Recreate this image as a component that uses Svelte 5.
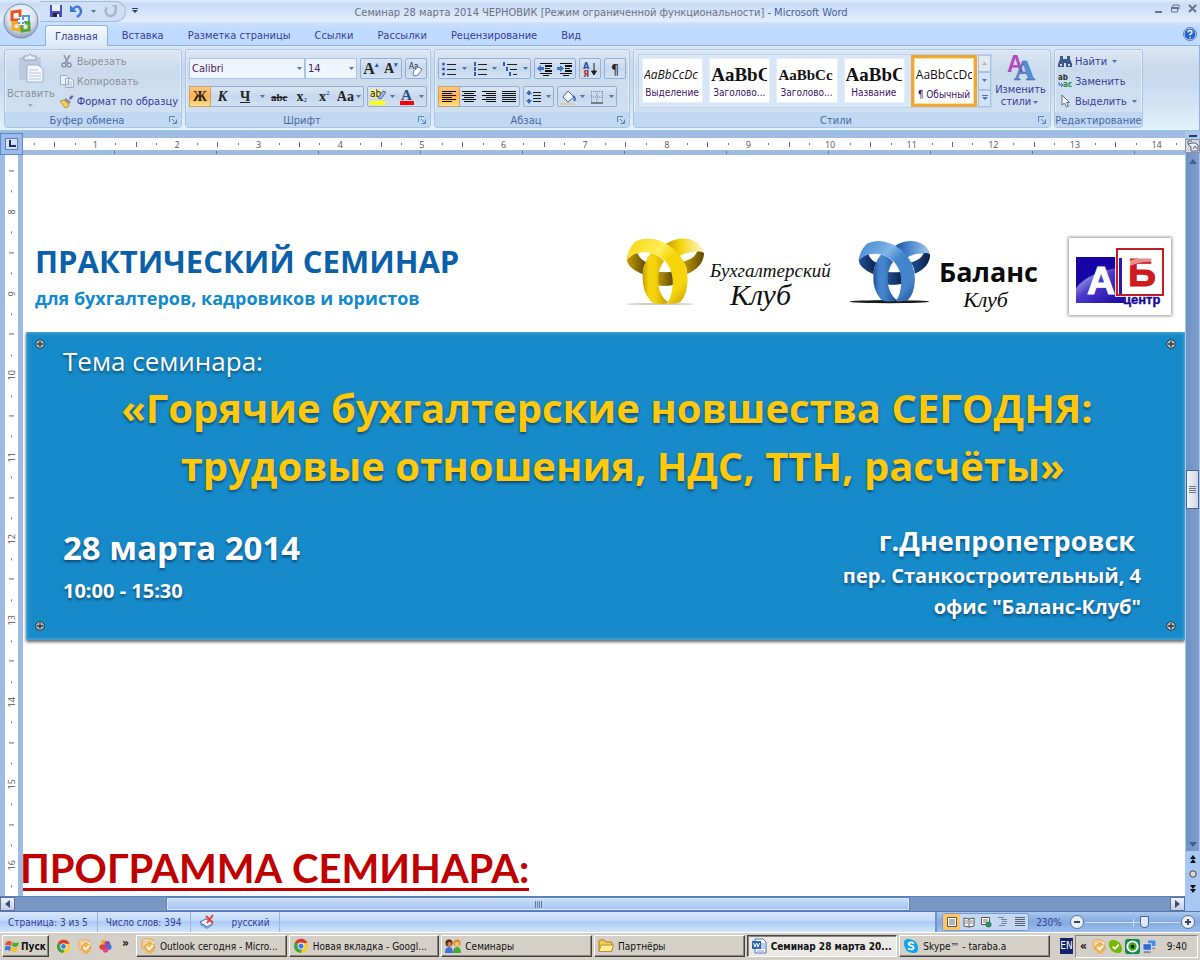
<script>
  const tabs = ['Главная', 'Вставка', 'Разметка страницы', 'Ссылки', 'Рассылки', 'Рецензирование', 'Вид'];
  const hTicks = Array.from({ length: 57 }, (_, i) => (i % 4 === 3 ? String((i + 1) / 4) : i % 4 === 1 ? '|' : '·'));
  const vTicks = Array.from({ length: 36 }, (_, i) => (i % 4 === 2 ? String(8 + (i - 2) / 4) : i % 4 === 0 ? '|' : '·'));
  const styles = [
    { name: 'Выделение', sample: 'AaBbCcDc', kind: 'em' },
    { name: 'Заголово...', sample: 'AaBbCc', kind: 'h1' },
    { name: 'Заголово...', sample: 'AaBbCc', kind: 'h2' },
    { name: 'Название', sample: 'AaBbCc', kind: 'h1' },
    { name: '¶ Обычный', sample: 'AaBbCcDc', kind: 'normal', on: true }
  ];
  const tasks = [
    { icon: 'outlook', text: 'Outlook сегодня - Micro...' },
    { icon: 'chrome', text: 'Новая вкладка - Googl...' },
    { icon: 'people', text: 'Семинары' },
    { icon: 'folder', text: 'Партнёры' },
    { icon: 'word', text: 'Семинар 28 марта 20...', on: true },
    { icon: 'skype', text: 'Skype™ - taraba.a' }
  ];
  const yellow = { a: '#ffee58', b: '#f5d50a', c: '#c39c02', d: '#5e4a00', fade: '#fff6d8' };
  const blue = { a: '#7fb6e6', b: '#4484cc', c: '#1f4f94', d: '#0c2348', fade: '#a9cbee' };
  const rows = [0, 2, 4, 6, 8, 10];
</script>

{#snippet rings(id, c)}
  <svg class="rings {id}" viewBox="60 50 240 210" aria-hidden="true">
    <defs>
      <linearGradient id="{id}f" x1="0" y1="0" x2="1" y2="1">
        <stop offset="0" stop-color={c.b} /><stop offset=".35" stop-color={c.a} /><stop offset=".5" stop-color={c.b} /><stop offset=".8" stop-color={c.b} /><stop offset="1" stop-color={c.c} />
      </linearGradient>
      <linearGradient id="{id}l" x1="0" y1="0" x2="1" y2="0">
        <stop offset="0" stop-color={c.c} /><stop offset=".25" stop-color={c.b} /><stop offset=".45" stop-color={c.b} /><stop offset="1" stop-color={c.c} />
      </linearGradient>
      <linearGradient id="{id}r" x1="0" y1="0" x2="1" y2="0">
        <stop offset="0" stop-color={c.c} /><stop offset=".4" stop-color={c.b} /><stop offset="1" stop-color={c.fade} />
      </linearGradient>
      <linearGradient id="{id}d" x1="0" y1="0" x2="1" y2="0">
        <stop offset="0" stop-color={c.c} /><stop offset="1" stop-color={c.d} />
      </linearGradient>
    </defs>
    <ellipse cx="165" cy="251" rx={id === 'b' ? 130 : 100} ry={id === 'b' ? 5 : 3} fill={id === 'b' ? '#1a1a22' : '#cfcabb'} />
    <path d="M180 72Q214 50 252 56Q290 66 297 98Q250 88 216 112Q206 90 180 72Z" fill="url(#{id}r)" />
    <path d="M276 94Q290 92 297 98Q297 138 247 161Q246 138 234 124Q268 116 276 94Z" fill="url(#{id}d)" />
    <path d="M67 108Q78 97 97 96Q102 115 123 125Q113 142 113 162Q62 140 66 112Z" fill="url(#{id}d)" />
    <path d="M155 153Q180 159 206 153V193Q180 200 155 194Z" fill="url(#{id}d)" />
    <path d="M138 98Q162 104 177 122Q156 150 160 190Q164 228 190 246Q184 251 172 251Q146 251 137 243Q110 212 113 162Q116 124 138 98Z" fill="url(#{id}l)" />
    <path d="M66 118Q67 88 92 63Q130 44 178 67Q246 103 248 178Q246 226 226 245Q212 252 186 250Q205 222 203 178Q198 118 142 99Q95 88 66 118Z" fill="url(#{id}f)" />
    <path d="M181 196Q194 220 186 243Q170 228 163 198Z" fill="#fff" />
  </svg>
{/snippet}

{#snippet arrow()}<svg class="dd" viewBox="0 0 5 3" aria-hidden="true"><path d="M0 0h5L2.500 3z" fill="#4f73a8" /></svg>{/snippet}

{#snippet lines(kind)}
  <svg class="i16" viewBox="0 0 16 16" aria-hidden="true">
    {#each rows as y, n}
      {@const short = n % 2 === 1 && kind !== 'full'}
      <rect x={short ? (kind === 'left' ? 1 : kind === 'center' ? 3 : 5) : 1} y={y + 2} width={short ? 10 : 14} height="1" fill="#111" />
    {/each}
  </svg>
{/snippet}

{#snippet listIcon(kind)}
  <svg class="i16" viewBox="0 0 16 16" aria-hidden="true">
    {#each [3, 8, 13] as y, n}
      {#if kind === 'bullets'}<circle cx="2.500" cy={y} r="1.500" fill="#2d5fae" />
      {:else}<rect x={kind === 'multi' ? 1 + n * 3 : 2} y={y - 2} width="2" height="4" fill="#2d5fae" />{/if}
      <rect x={kind === 'multi' ? 5 + n * 3 : 6} y={y} width={kind === 'multi' ? 10 - n * 3 : 9} height="1" fill="#222" />
    {/each}
  </svg>
{/snippet}

{#snippet indent(dir)}
  <svg class="i16" viewBox="0 0 16 16" aria-hidden="true">
    <path d="M3 2h12v1H3zM8 4h7v2H8zM8 7h5v1H8zM8 9h7v2H8zM3 12h12v1H3zM6 14h6v1H6z" fill="#111" />
    <path d={dir === 'out' ? 'M0 7.500L4 4v2h3v3H4v2z' : 'M7 7.500L3 4v2H0v3h3v2z'} fill="#3c74c9" />
  </svg>
{/snippet}

{#snippet launcher()}
  <svg class="launch" viewBox="0 0 8 8" aria-hidden="true"><path d="M.5 6V.5H6M3 3l4 4M7.500 3.500v4h-4" fill="none" stroke="#5a80b5" /></svg>
{/snippet}

{#snippet appIcon(kind)}
  <svg class="i16" viewBox="0 0 16 16" aria-hidden="true">
    {#if kind === 'chrome'}
      <circle cx="8" cy="8" r="7" fill="#f7ce2b" />
      <path d="M8 8L2 4.300A7 7 0 0 1 14.500 5H8z" fill="#dd3a2c" />
      <path d="M8 8L2 4.300A7 7 0 0 0 7.500 15L10.500 9z" fill="#3fa447" />
      <circle cx="8" cy="8" r="3.400" fill="#fff" /><circle cx="8" cy="8" r="2.600" fill="#3d7de0" />
    {:else if kind === 'outlook'}
      <path d="M2 3q0-2 2-2h7q2 0 2 2v8H4q-2 0-2-2z" fill="#fbd9a6" stroke="#e0a25a" />
      <path d="M4 4l10-1 1 8-2 4H6l-2-3z" fill="#fff0d6" stroke="#e3b06a" stroke-width=".8" />
      <circle cx="9.500" cy="9.500" r="4.800" fill="#f3b952" stroke="#d08f30" stroke-width=".8" /><path d="M6.800 8.500l2.500 2.800L13 7" fill="none" stroke="#fff" stroke-width="1.800" />
    {:else if kind === 'people'}
      <path d="M0 15q0-6 4-6t4 6z" fill="#3c6fe0" /><circle cx="4" cy="5" r="3.500" fill="#4b2413" /><circle cx="4.500" cy="6" r="2.200" fill="#e07a4a" />
      <path d="M8 15q0-6 4-6t4 6z" fill="#48a832" /><circle cx="12" cy="5" r="3.500" fill="#d88a1c" /><circle cx="12" cy="6" r="2.200" fill="#f7bd77" />
    {:else if kind === 'folder'}
      <path d="M1 3q0-1 1-1h4l2 2h5q1 0 1 1v8H1z" fill="#f3c94f" stroke="#a8821c" /><path d="M3 7h12.500l-2 6.500H1z" fill="#ffec9a" stroke="#b8922c" />
    {:else if kind === 'word'}
      <path d="M4 1h8l3 3v11H4z" fill="#fff" stroke="#4a72bb" /><path d="M10 6h4M10 8h4M10 10h4M6 13h7" stroke="#7ba0dd" />
      <rect x="1" y="3" width="9" height="8" fill="#3265b8" /><path d="M2.500 5l1.500 4 1.500-4 1.500 4L8.500 5" fill="none" stroke="#fff" />
    {:else if kind === 'skype'}
      <rect x="1" y="1" width="9" height="9" rx="4" fill="#12a5e8" /><rect x="6" y="6" width="9" height="9" rx="4" fill="#12a5e8" /><circle cx="8" cy="8" r="6.300" fill="#12a5e8" />
      <path d="M11 5.600Q8.300 3.600 6 5q-1.200 1.800 1.800 2.600 3.800 1 2.700 2.900Q8 12.500 5 10.400" fill="none" stroke="#fff" stroke-width="1.700" />
    {:else if kind === 'flower'}
      <circle cx="6.500" cy="4" r="3" fill="#f1a721" /><circle cx="10" cy="5" r="3" fill="#8c46bd" /><circle cx="11.500" cy="8.500" r="3" fill="#3a79db" /><circle cx="8" cy="11.500" r="3" fill="#e83e93" /><circle cx="4.500" cy="8.500" r="3" fill="#e4402d" /><circle cx="8" cy="8" r="1.800" fill="#b33fa0" />
    {:else if kind === 'check'}
      <rect x="1" y="1" width="9" height="9" rx="4" fill="#76b900" /><rect x="6" y="6" width="9" height="9" rx="4" fill="#76b900" /><circle cx="8" cy="8" r="6" fill="#76b900" /><path d="M5 8l2.500 2.500L11.500 6" fill="none" stroke="#fff" stroke-width="1.800" />
    {:else if kind === 'eye'}
      <path d="M0 3q0-3 3-3h10q3 0 3 3v10q0 3-3 3H3q-3 0-3-3z" fill="#0b8a57" /><circle cx="8" cy="8" r="6.500" fill="#fff" /><circle cx="8" cy="8" r="4.500" fill="#46a81a" /><circle cx="8" cy="8" r="2" fill="#062606" />
    {:else if kind === 'net'}
      <rect x="6" y="1" width="9" height="7" fill="#4b8be8" stroke="#cfd9ef" /><path d="M9 9h5v2H9z" fill="#8f9cb8" /><rect x="1" y="5" width="9" height="7" fill="#2f6bd1" stroke="#dbe4f5" /><path d="M2 14h7" stroke="#7d89a5" stroke-width="2" />
    {/if}
  </svg>
{/snippet}

<div class="window">
  <header class="title">
    <div class="qat">
      <button aria-label="Сохранить"><svg class="i14" viewBox="0 0 14 14"><path d="M1 1h12v12H1z" fill="#4a50b8" /><path d="M3 1h8v6H3z" fill="#e8eefc" /><path d="M4 9h6v4H4z" fill="#20244c" /><path d="M8 10h2v3H8z" fill="#fff" /></svg></button>
      <button aria-label="Отменить"><svg class="i14" viewBox="0 0 14 14"><path d="M3 6q5-6 8-1.500T8 13" fill="none" stroke="#3f78d6" stroke-width="2.500" /><path d="M1 1v7h7z" fill="#3f78d6" /></svg></button>
      {@render arrow()}
      <button aria-label="Повторить"><svg class="i14" viewBox="0 0 14 14"><path d="M3 3.500a5 5 0 1 0 8 1" fill="none" stroke="#a4b5cd" stroke-width="2.500" /><path d="M8 1h5v5z" fill="#a4b5cd" /></svg></button>
    </div>
    <svg class="more" viewBox="0 0 6 6" aria-hidden="true"><path d="M0 0h6v1H0zM0 2h6L3 5z" fill="#28406e" /></svg>
    <h1>Семинар 28 марта 2014 ЧЕРНОВИК [Режим ограниченной функциональности] <span>- Microsoft Word</span></h1>
    <div class="winbtns">
      <button aria-label="Свернуть"><svg viewBox="0 0 9 9"><path d="M1 7h7v2H1z" fill="#68748a" /></svg></button>
      <button aria-label="Восстановить"><svg viewBox="0 0 9 9"><path d="M2 3V1h6v4H6M.5 4h6v4h-6z" fill="none" stroke="#68748a" /><path d="M0 3h7v2H0z" fill="#68748a" /></svg></button>
      <button aria-label="Закрыть"><svg viewBox="0 0 9 9"><path d="M1 1l7 7M8 1L1 8" stroke="#68748a" stroke-width="2" /></svg></button>
    </div>
  </header>
  <button class="orb" aria-label="Кнопка Office">
    <svg viewBox="0 0 36 36">
      <defs><radialGradient id="orbg" cx=".5" cy=".35" r=".65"><stop offset="0" stop-color="#fff" /><stop offset=".6" stop-color="#dfe6f1" /><stop offset="1" stop-color="#8fa0ba" /></radialGradient></defs>
      <circle cx="18" cy="18" r="17" fill="url(#orbg)" stroke="#7c8ba5" />
      <g fill="none" stroke-width="3">
        <path d="M15 17H9V9l8-1v6" stroke="#e2561f" /><path d="M20 17v-4h6v6h-5" stroke="#4f9be0" stroke-width="2" /><path d="M17 22v5l-7-1v-6h5" stroke="#f3a91c" /><path d="M22 20h4v7l-7 1v-6" stroke="#5aa62e" />
      </g>
      <path d="M15 15h2v2h-2zM19 15h2v2h-2zM15 19h2v2h-2zM19 19h2v2h-2z" fill="#5b9bdc" />
    </svg>
  </button>
  <nav class="tabs">
    {#each tabs as t, i}<button class:active={i === 0}>{t}</button>{/each}
    <button class="help" aria-label="Справка"><svg viewBox="0 0 14 14"><circle cx="7" cy="7" r="6" fill="#2563d3" stroke="#dfeafd" /><circle cx="7" cy="7" r="6.500" fill="none" stroke="#5c7fb8" /><path d="M5 5.500q0-2 2-2t2 1.800Q9 6.500 7 7.500v1M7 10v1.200" fill="none" stroke="#fff" stroke-width="1.400" /></svg></button>
  </nav>

  <section class="ribbon">
    <div class="group clip">
      <div class="body">
        <button class="paste off">
          <svg viewBox="0 0 28 30" aria-hidden="true"><rect x="2" y="4" width="22" height="23" rx="2" fill="#bccadf" /><path d="M7 3h4q2-4 4 0h4v4H7z" fill="#e8eef7" stroke="#8fa1bc" /><path d="M10 12h11l5 4v13H10z" fill="#f4f8fe" stroke="#9db2d1" /><path d="M12 17h9M12 20h12M12 23h12M12 26h12" stroke="#b4c6e0" /></svg>
          Вставить
          <svg class="dd" viewBox="0 0 5 3"><path d="M0 0h5L2.500 3z" fill="#a3a9b4" /></svg>
        </button>
        <div class="stack">
          <button class="off"><svg class="i14" viewBox="0 0 14 14"><path d="M4 1l4 8M10 1L5 9" stroke="#8793a9" stroke-width="1.500" /><circle cx="4" cy="11" r="2" fill="none" stroke="#8793a9" stroke-width="1.500" /><circle cx="9" cy="11" r="2" fill="none" stroke="#8793a9" stroke-width="1.500" /></svg>Вырезать</button>
          <button class="off"><svg class="i14" viewBox="0 0 14 14"><path d="M.5 1.500h6l2 2v7h-8zM5.500 4.500h5l3 2v7h-8z" fill="#edf3fb" stroke="#9aaac4" /><path d="M7 8h5M7 10h5M7 12h5" stroke="#b1c0d8" /></svg>Копировать</button>
          <button><svg class="i14" viewBox="0 0 14 14"><path d="M9 4l3-3 1.500 1.500-3 3.500z" fill="#6a5fa8" /><path d="M6 4l5 4-2 2-5-4z" fill="#8d8da0" /><path d="M0 7l4-1 5 4-1 3-3 1z" fill="#f2d057" stroke="#a87e14" stroke-width=".7" /></svg>Формат по образцу</button>
        </div>
      </div>
      <footer><span>Буфер обмена</span>{@render launcher()}</footer>
    </div>

    <div class="group font">
      <div class="body rows">
        <div class="line">
          <div class="combos">
            <label class="combo wide"><input aria-label="Шрифт" value="Calibri" />{@render arrow()}</label>
            <label class="combo"><input aria-label="Размер шрифта" value="14" />{@render arrow()}</label>
          </div>
          <div class="set push"><button class="serif big">A<sup>▴</sup></button><button class="serif">A<sup>▾</sup></button></div>
          <div class="set push"><button aria-label="Очистить формат"><svg class="i16" viewBox="0 0 16 16"><text x="1" y="8" font-size="8" fill="#222">Aa</text><path d="M5 11l5-5 4 2-4 6-4 1z" fill="#fff" stroke="#6b7fa4" /></svg></button></div>
        </div>
        <div class="line">
          <div class="set grow">
            <button class="serif on">Ж</button><button class="serif"><i>К</i></button><button class="serif"><u>Ч</u></button>{@render arrow()}<button class="serif abc"><s>abc</s></button><button class="serif">x<sub>2</sub></button><button class="serif">x<sup>2</sup></button><button class="serif case">Aa{@render arrow()}</button>
          </div>
          <div class="set push">
            <button aria-label="Цвет выделения"><svg class="i18" viewBox="0 0 18 18"><path d="M1 1h11v9H1z" fill="#f7f08a" /><text x="1" y="9" font-size="10" fill="#222">ab</text><path d="M9 10l5-7 3 1-5 7z" fill="#9cb5df" stroke="#58709b" /><rect x="1" y="13" width="15" height="4" fill="#ff0" /></svg></button>{@render arrow()}
            <button aria-label="Цвет текста"><svg class="i18" viewBox="0 0 18 18"><text x="3" y="12" font-size="15" font-weight="bold" font-family="Liberation Serif, serif" fill="#2c4c8c">A</text><rect x="2" y="13" width="14" height="4" fill="#f00" /></svg></button>{@render arrow()}
          </div>
        </div>
      </div>
      <footer><span>Шрифт</span>{@render launcher()}</footer>
    </div>

    <div class="group para">
      <div class="body rows">
        <div class="line">
          <div class="set grow"><button aria-label="Маркеры">{@render listIcon('bullets')}</button>{@render arrow()}<button aria-label="Нумерация">{@render listIcon('num')}</button>{@render arrow()}<button aria-label="Многоуровневый список">{@render listIcon('multi')}</button>{@render arrow()}</div>
          <div class="set"><button aria-label="Уменьшить отступ">{@render indent('out')}</button><button aria-label="Увеличить отступ">{@render indent('in')}</button></div>
          <div class="set"><button aria-label="Сортировка"><svg class="i16" viewBox="0 0 16 16"><text x="1" y="8" font-size="9" font-weight="bold" fill="#2d4f9c">А</text><text x="1" y="16" font-size="9" font-weight="bold" fill="#a03a3a">Я</text><path d="M12 2v10M9.500 10l2.500 4 2.500-4z" stroke="#222" fill="#222" /></svg></button></div>
          <div class="set"><button class="pil">¶</button></div>
        </div>
        <div class="line">
          <div class="set"><button class="on" aria-label="По левому краю">{@render lines('left')}</button><button aria-label="По центру">{@render lines('center')}</button><button aria-label="По правому краю">{@render lines('right')}</button><button aria-label="По ширине">{@render lines('full')}</button></div>
          <div class="set"><button aria-label="Интервал"><svg class="i16" viewBox="0 0 16 16"><path d="M7 3h8v1H7zM7 6h8v1H7zM7 9h8v1H7zM7 12h8v1H7z" fill="#222" /><path d="M3 1l3 4H4v1H2V5H0zM3 15l3-4H4v-1H2v1H0z" fill="#3468bd" /></svg></button>{@render arrow()}</div>
          <div class="set"><button aria-label="Заливка"><svg class="i16" viewBox="0 0 16 16"><path d="M8 2l6 6-6 5-5-5z" fill="#f4f7fc" stroke="#51678f" /><path d="M13 7q3 2 1 5" stroke="#3468bd" stroke-width="2" fill="none" /><path d="M0 14h15v2H0z" fill="#d8cda8" /></svg></button>{@render arrow()}<button aria-label="Границы"><svg class="i16" viewBox="0 0 16 16"><path d="M2.500 2v12M8 2v12M13.500 2v12M2 2.500h12M2 8h12" stroke="#7b8798" stroke-dasharray="1 1" /><path d="M2 14h12" stroke="#222" /></svg></button>{@render arrow()}</div>
        </div>
      </div>
      <footer><span>Абзац</span>{@render launcher()}</footer>
    </div>

    <div class="group styl">
      <div class="body">
        <div class="gallery">
          {#each styles as s}
            <button class="card" class:sel={s.on}><span class="sample {s.kind}">{s.sample}</span><span class="cap">{s.name}</span></button>
          {/each}
          <div class="gscroll"><button class="dim" aria-label="Вверх"><svg class="dd" viewBox="0 0 5 3"><path d="M0 3h5L2.500 0z" fill="#a9b3c2" /></svg></button><button aria-label="Вниз">{@render arrow()}</button><button aria-label="Ещё"><svg viewBox="0 0 6 6" class="d6"><path d="M0 0h6v1H0zM0 2h6L3 5z" fill="#4f73a8" /></svg></button></div>
        </div>
        <button class="change">
          <svg viewBox="0 0 30 30" aria-hidden="true"><text x="1" y="18" font-size="23" font-weight="bold" font-family="Liberation Sans, sans-serif" fill="#b34bb8">A</text><text x="8" y="26" font-size="29" font-weight="bold" font-family="Liberation Serif, serif" fill="#5b8cd6" stroke="#2f5ea8" stroke-width=".5">A</text></svg>
          Изменить
          <span>стили {@render arrow()}</span>
        </button>
      </div>
      <footer><span>Стили</span>{@render launcher()}</footer>
    </div>

    <div class="group edit">
      <div class="body">
        <div class="stack">
          <button><svg class="i14" viewBox="0 0 14 14"><path d="M2 2h3v3h4V2h3v3l2 5v3H8V9H6v4H0v-3l2-5z" fill="#3b588c" /><path d="M2 10h2v2H2zM10 10h2v2h-2z" fill="#c9d8f0" /></svg>Найти {@render arrow()}</button>
          <button><svg class="i14" viewBox="0 0 14 14"><text x="0" y="6" font-size="8" font-weight="bold" fill="#333">ab</text><text x="5" y="13" font-size="8" font-weight="bold" fill="#2f8a3c">ac</text><path d="M1 8v3h3M3 9l2 2-2 2" fill="none" stroke="#3468bd" /></svg>Заменить</button>
          <button><svg class="i14" viewBox="0 0 14 14"><path d="M4 1v10l2.500-2 2 4 2-1-2-3.500h3z" fill="#fff" stroke="#56698c" /></svg>Выделить {@render arrow()}</button>
        </div>
      </div>
      <footer><span>Редактирование</span></footer>
    </div>
  </section>

  <main class="work">
    <div class="corner"><button aria-label="Табуляция"><svg viewBox="0 0 8 8"><path d="M1 0h2v5h5v2H1z" fill="#1f2f55" /></svg></button></div>
    <div class="hruler">
      <div class="hbar">{#each hTicks as t}<span class:bar={t === '|'} class:dot={t === '·'}>{t === '|' || t === '·' ? '' : t}</span>{/each}</div>
      <div class="stops">{#each Array(11) as _}<span></span>{/each}</div>
    </div>
    <div class="vruler"><div class="vbar">{#each vTicks as t}<span class:bar={t === '|'} class:dot={t === '·'}>{t === '|' || t === '·' ? '' : t}</span>{/each}</div></div>

    <article class="page">
      <div class="head">
        <div class="lead"><h2>ПРАКТИЧЕСКИЙ СЕМИНАР</h2><p>для бухгалтеров, кадровиков и юристов</p></div>
        <div class="logo">{@render rings('y', yellow)}<div class="script"><span>Бухгалтерский</span><span class="klub">Клуб</span></div></div>
        <div class="logo second">{@render rings('b', blue)}<div class="balance"><b>Баланс</b><span>Клуб</span></div></div>
        <svg class="abc-logo" viewBox="0 0 102 77" role="img" aria-label="АБ центр">
          <defs><linearGradient id="abg" x1="0" y1="0" x2="1" y2="1"><stop offset="0" stop-color="#e9e6fb" /><stop offset=".45" stop-color="#4a3ac8" /><stop offset="1" stop-color="#1a06a4" /></linearGradient></defs>
          <rect x="7" y="19" width="48" height="46" fill="#1703a6" />
          <path d="M7 50Q20 33 55 29V65H7z" fill="url(#abg)" />
          <rect x="46" y="9" width="50" height="50" fill="#fff" opacity=".85" />
          <rect x="48" y="11" width="46" height="46" fill="#fff" stroke="#c61d26" stroke-width="2" />
          <path d="M50 20h3v36h-3z" fill="#2a18b0" />
          <text x="18" y="56" font-size="39" font-weight="bold" fill="#fff" stroke="#fff">А</text>
          <text x="59" y="48" font-size="39" font-weight="bold" fill="#cf1a20" stroke="#cf1a20">Б</text>
          <path d="M57 24Q72 18 90 18V25Q74 21 57 30z" fill="#fff" opacity=".5" />
          <text x="54" y="66" font-size="13" font-weight="bold" fill="#1a0a9c" stroke="#1a0a9c" stroke-width=".4">центр</text>
        </svg>
      </div>

      <div class="banner">
        {#each ['tl', 'tr', 'bl', 'br'] as p}<svg class="screw {p}" viewBox="0 0 10 10" aria-hidden="true"><circle cx="5" cy="5" r="4.300" fill="#b9c2c7" stroke="#1d3946" /><path d="M5 2v6M2 5h6" stroke="#333" stroke-width="1.300" /></svg>{/each}
        <p class="theme">Тема семинара:</p>
        <h2>«Горячие бухгалтерские новшества СЕГОДНЯ:<br />&nbsp;&nbsp;&nbsp;трудовые отношения, НДС, ТТН, расчёты»</h2>
        <div class="info">
          <div><p class="date">28 марта 2014</p><p class="time">10:00 - 15:30</p></div>
          <div class="place"><p class="city">г.Днепропетровск</p><p>пер. Станкостроительный, 4</p><p>офис "Баланс-Клуб"</p></div>
        </div>
      </div>
      <h2 class="program">ПРОГРАММА СЕМИНАРА:</h2>
    </article>

    <div class="vscroll">
      <div class="vtop"><span></span><button aria-label="Линейка"><svg viewBox="0 0 12 12"><path d="M1 4V1h4M1 4l3 3v4h7V5L8 3H5z" fill="#e9eef7" stroke="#5b6472" /><path d="M6 9l2-3 2 3" stroke="#5b6472" fill="none" /></svg></button></div>
      <div class="vtrack">
        <svg class="tri" viewBox="0 0 8 5"><path d="M0 5h8L4 0z" fill="#3f5e92" /></svg>
        <i class="before"></i><button class="vthumb" aria-label="Прокрутка"><i></i><i></i><i></i><i></i></button><i class="after"></i>
        <svg class="tri" viewBox="0 0 8 5"><path d="M0 0h8L4 5z" fill="#3f5e92" /></svg>
      </div>
      <div class="browse">
        <svg viewBox="0 0 8 8"><path d="M1 4l3-4 3 4zM1 8l3-4 3 4z" fill="#111" /></svg>
        <svg viewBox="0 0 8 8"><circle cx="4" cy="4" r="3.200" fill="#dcdcd6" stroke="#444" /></svg>
        <svg viewBox="0 0 8 8"><path d="M1 0l3 4 3-4zM1 4l3 4 3-4z" fill="#111" /></svg>
      </div>
    </div>

    <div class="hscroll">
      <button class="end" aria-label="Влево"><svg viewBox="0 0 5 8"><path d="M5 0v8L0 4z" fill="#34507f" /></svg></button>
      <i class="before"></i><button class="hthumb" aria-label="Прокрутка"><i></i><i></i><i></i><i></i></button><i class="after"></i>
      <button class="end" aria-label="Вправо"><svg viewBox="0 0 5 8"><path d="M0 0v8l5-4z" fill="#34507f" /></svg></button>
    </div>
  </main>

  <div class="status">
    <span class="cell">Страница: 3 из 5</span><span class="cell">Число слов: 394</span>
    <span class="cell spell"><svg class="i16" viewBox="0 0 16 16"><path d="M1 8l6-3 7 4-6 4z" fill="#f4f7fd" stroke="#4c6aa5" /><path d="M1 9v2l7 4 6-4V9l-6 4z" fill="#7d9bd0" /><path d="M7 2l7 7M14 1L8 9" stroke="#e8432d" stroke-width="2" /></svg></span>
    <span class="cell lang">русский</span>
    <div class="right">
      <div class="views">
        <button class="on" aria-label="Разметка страницы"><svg viewBox="0 0 12 12"><path d="M1.500 1.500h9v9h-9z" fill="#fff" stroke="#555" /><path d="M3 4h6M3 6h6M3 8h6" stroke="#666" /></svg></button>
        <button aria-label="Режим чтения"><svg viewBox="0 0 12 12"><path d="M1 2l5 1 5-1v8l-5 1-5-1zM6 3v8" fill="#fff" stroke="#555" /><path d="M2 5h3M7 5h3M2 7h3M7 7h3" stroke="#888" /></svg></button>
        <button aria-label="Веб-документ"><svg viewBox="0 0 12 12"><path d="M1.500 1.500h8v7h-8z" fill="#fff" stroke="#555" /><path d="M3 4h5M3 6h4" stroke="#777" /><circle cx="8.500" cy="8.500" r="3" fill="#2f8a62" /></svg></button>
        <button aria-label="Структура"><svg viewBox="0 0 12 12"><path d="M1 1h6v1H1zM4 3h6v1H4zM5 5h5v1H5zM4 7h6v1H4zM2 9h6v1H2z" fill="#7a8290" /></svg></button>
        <button aria-label="Черновик"><svg viewBox="0 0 12 12"><path d="M1 1h10v1H1zM1 3h10v1H1zM1 5h10v1H1zM1 7h10v1H1zM1 9h10v1H1z" fill="#5a6270" /></svg></button>
      </div>
      <span class="pct">230%</span>
      <button class="rnd" aria-label="Уменьшить"><svg viewBox="0 0 16 16"><circle cx="8" cy="8" r="6.500" fill="#e9f1fc" stroke="#5e7190" /><path d="M5 8h6" stroke="#3a4658" stroke-width="2" /></svg></button>
      <input class="zoom" type="range" aria-label="Масштаб" min="0" max="100" value="64" />
      <button class="rnd" aria-label="Увеличить"><svg viewBox="0 0 16 16"><circle cx="8" cy="8" r="6.500" fill="#e9f1fc" stroke="#5e7190" /><path d="M5 8h6M8 5v6" stroke="#3a4658" stroke-width="2" /></svg></button>
    </div>
  </div>

  <div class="taskbar">
    <button class="start"><svg class="i14" viewBox="0 0 14 14"><path d="M1 3q3-2 6 0L6 7Q3 5 0 7z" fill="#e8502a" /><path d="M8 3q3 2 6 0l-1 4q-3 2-6 0z" fill="#4fae32" /><path d="M0 8q3-2 6 0l-1 4q-3-2-6 0z" fill="#3a76db" /><path d="M7 8q3 2 6 0l-1 4q-3 2-6 0z" fill="#f6c220" /></svg>Пуск</button>
    <div class="quick">{@render appIcon('chrome')}{@render appIcon('outlook')}{@render appIcon('flower')}<b>»</b></div>
    <div class="tasks">
      {#each tasks as t}<button class:on={t.on}>{@render appIcon(t.icon)}<span>{t.text}</span></button>{/each}
    </div>
    <span class="en">EN</span>
    <div class="tray"><b>«</b>{@render appIcon('outlook')}{@render appIcon('check')}{@render appIcon('eye')}{@render appIcon('net')}<time>9:40</time></div>
  </div>
</div>

<style>
  :global(body) { margin: 0; }
  .window { --ui: "DejaVu Sans Condensed", "DejaVu Sans", sans-serif; --doc: "Open Sans", "Noto Sans", sans-serif; position: relative; display: flex; flex-direction: column; min-height: 100vh; font-family: var(--ui); font-size: 10px; color: #35409a; background: #9dbbe3; overflow: hidden; }
  .window * { box-sizing: border-box; }
  button { font: inherit; color: inherit; background: none; border: 0; padding: 0; margin: 0; display: flex; align-items: center; justify-content: center; white-space: nowrap; }
  h1, h2, p { margin: 0; }
  svg { display: block; flex: none; }
  .i14 { width: 14px; height: 14px; }
  .i16 { width: 16px; height: 16px; }
  .i18 { width: 18px; height: 18px; }
  .dd { width: 5px; height: 3px; margin: 0 2px; }
  .d6 { width: 6px; height: 6px; }

  .title { display: flex; align-items: center; height: 22px; padding-left: 40px; background: linear-gradient(#dcebfd, #c9dcf6 20%, #d5e5fa 60%, #e4effd); }
  .qat { display: flex; align-items: center; gap: 6px; height: 21px; width: 86px; padding-left: 9px; border: 1px solid #a3bbdd; border-left: 0; border-radius: 0 11px 11px 0; background: #cfdff5; }
  .more { width: 6px; height: 6px; margin-left: 6px; }
  h1 { flex: 1; text-align: center; font-size: 11px; font-weight: normal; color: #6c7282; line-height: 24px; padding: 4px 90px 0 0; white-space: nowrap; }
  h1 span { color: #41629e; }
  .winbtns { display: flex; gap: 8px; padding: 0 3px 6px 0; }
  .winbtns svg { width: 9px; height: 9px; }
  .orb { position: absolute; left: 3px; top: 3px; z-index: 2; }
  .orb svg { width: 36px; height: 36px; }

  .tabs { display: flex; align-items: flex-end; height: 24px; padding-left: 43px; background: linear-gradient(#cfe2fd, #bfdbff 30%); border-bottom: 1px solid #8db2e3; font-size: 11px; }
  .tabs button { height: 19px; padding: 0 12px; }
  .tabs .active { margin: 0 2px -1px; padding: 0 9px; height: 21px; border: 1px solid #8db2e3; border-bottom: 0; border-radius: 3px 3px 0 0; background: linear-gradient(#f4f9ff, #dde9f7); }
  .tabs .help { margin-left: auto; padding: 0 3px 3px 0; }
  .help svg { width: 14px; height: 14px; }

  .ribbon { display: flex; gap: 3px; height: 85px; padding: 3px 4px 2px; border-right: 1px solid #8db2e3; border-bottom: 1px solid #9cc; background: linear-gradient(#dce7f5, #c9daed 25%, #cadcf0 50%, #e0f2fa); }
  .group { display: flex; flex-direction: column; border: 1px solid #a9c4e5; border-radius: 3px; box-shadow: inset 0 0 0 1px #e4eefa; background: linear-gradient(#dbe6f4, #cbdbee 25%, #d0e0f2 80%); }
  .group footer { display: flex; align-items: center; justify-content: center; height: 15px; background: #c0d8f0; color: #4868a5; font-size: 11px; line-height: 13px; padding-top: 1px; }
  .group footer span { flex: 1; text-align: center; }
  .launch { width: 8px; height: 8px; margin-right: 4px; }
  .body { flex: 1; display: flex; min-height: 0; }
  .clip { width: 178px; } .font { width: 246px; } .para { width: 196px; } .styl { width: 418px; } .edit { width: 89px; }
  .off { color: #8c929c; }
  .paste { flex-direction: column; justify-content: flex-start; width: 52px; padding-top: 3px; gap: 4px; font-size: 11px; line-height: 13px; }
  .paste svg:first-child { width: 28px; height: 30px; }
  .stack { display: flex; flex-direction: column; justify-content: center; gap: 6px; font-size: 11px; padding: 0 3px; }
  .stack button { justify-content: flex-start; gap: 3px; height: 14px; }
  .rows { flex-direction: column; padding: 8px 3px 0; gap: 7px; }
  .line { display: flex; gap: 3px; height: 21px; }
  .combos { display: flex; }
  .combo { display: flex; align-items: center; width: 52px; border: 1px solid #aac4e6; background: #eef5fd; }
  .combo.wide { width: 116px; }
  input { font: inherit; }
  .combo input { flex: 1; min-width: 0; width: 0; border: 0; background: none; padding: 0 2px; color: #4a1d5e; font-size: 11px; }
  .set { display: flex; align-items: center; border: 1px solid #93afd6; border-radius: 2px; background: linear-gradient(#dae6f5, #c6d8ee 50%, #d3e2f4); color: #222; }
  .set button { height: 19px; min-width: 20px; }
  .set .on { background: linear-gradient(#fbc98a, #ffb04a 50%, #ffe08a); outline: 1px solid #c9a466; }
  .serif { font-family: "Liberation Serif", serif; font-size: 14px; font-weight: bold; }
  .serif.big { font-size: 16px; }
  .serif sup, .serif sub { font-size: 7px; color: #2d5fae; line-height: 7px; }
  .serif sup { align-self: flex-start; padding-top: 3px; }
  .serif sub { align-self: flex-end; padding-bottom: 2px; }
  .serif.abc { font-size: 11px; }
  .grow { flex: 1; justify-content: space-between; }
  .push { margin-left: auto; }
  .pil { font-size: 14px; }

  .styl .body { padding: 4px 4px 4px; gap: 3px; }
  .gallery { display: flex; gap: 6px; padding: 2px 0 2px 3px; background: #d8e7f8; border: 1px solid #bed3ec; width: 354px; }
  .card { flex: 1; min-width: 0; flex-direction: column; justify-content: space-between; background: #fff; margin: 1px 0 2px; padding: 3px 2px 3px 1px; border: 1px solid #e5eefa; color: #3b1566; overflow: hidden; }
  .card.sel { border: 3px solid #efa636; box-shadow: inset 0 0 0 1px #ffe08e; margin: -2px 0; flex: 1 0 8px; padding: 4px 2px 3px; }
  .sample { width: 100%; height: 26px; line-height: 26px; overflow: hidden; text-align: left; color: #111; font-family: "Open Sans", sans-serif; font-size: 12px; }
  .cap { font-size: 10px; line-height: 12px; }
  .sample.em { font-style: italic; }
  .sample.h1 { font-family: "Liberation Serif", serif; font-weight: bold; font-size: 19px; }
  .sample.h2 { font-family: "Liberation Serif", serif; font-weight: bold; font-size: 15px; }
  .gscroll { display: flex; flex-direction: column; width: 13px; margin: -2px 0; margin-left: -5px; }
  .gscroll button { flex: 1; border: 1px solid #a9c1e2; background: #d3e3f6; }
  .gscroll .dim { background: #e4e7ec; }
  .change { flex: 1; flex-direction: column; font-size: 11px; line-height: 12px; }
  .change > svg { width: 30px; height: 30px; }
  .change span { display: flex; align-items: center; }

  .work { flex: 1; display: grid; grid-template-columns: 23px minmax(0, 1fr) 15px; grid-template-rows: 24px minmax(0, 1fr) 15px; background: #9dbbe3; }
  .corner { padding: 2px 0 0 0; }
  .corner button { width: 23px; height: 22px; border: 1px solid #5d87cc; background: #d0e0f7; box-shadow: inset 0 0 0 4px #9dbbe8, inset 0 0 0 5px #5b7fbd; }
  .corner svg { width: 8px; height: 8px; }
  .hruler { padding-top: 7px; min-width: 0; overflow: hidden; font-size: 9px; color: #555; }
  .hbar { display: flex; align-items: center; height: 12px; margin-right: -2px; padding-left: 1px; background: #fff; }
  .hbar span, .vbar span { flex: 1 1 0; min-width: 0; min-height: 0; display: flex; align-items: center; justify-content: center; font-family: "Open Sans", sans-serif; }
  .bar::before { content: ""; width: 1px; height: 5px; background: #667; }
  .dot::before { content: ""; width: 1px; height: 2px; background: #778; }
  .stops { display: flex; padding-left: 41px; height: 5px; align-items: center; }
  .stops span { flex: 1; display: flex; justify-content: center; }
  .stops span::before { content: ""; width: 1px; height: 3px; background: #68758c; }
  .vruler { padding: 0 5px; background: linear-gradient(90deg, #9dbbe3 5px, #fff 5px, #fff 18px, #9dbbe3 18px); }
  .vbar { height: 100%; padding-top: 6px; display: flex; flex-direction: column; font-size: 9px; color: #555; }
  .vbar span { writing-mode: vertical-rl; transform: rotate(180deg); }
  .vbar .bar::before { width: 5px; height: 1px; }

  .page { background: #fff; display: flex; flex-direction: column; overflow: hidden; font-family: var(--doc); min-width: 0; }
  .head { display: flex; align-items: flex-start; height: 177px; padding: 82px 14px 0 12px; }
  .lead { flex: 1; }
  .lead h2 { font-size: 31px; line-height: 48px; color: #0a61aa; white-space: nowrap; }
  .lead p { font-size: 18px; line-height: 26px; font-weight: bold; color: #128ace; white-space: nowrap; }
  .logo { display: flex; }
  .rings { width: 80px; height: 70px; overflow: visible; }
  .rings.b { width: 74px; }
  .script { width: 130px; padding-top: 23px; padding-left: 5px; display: flex; flex-direction: column; font-family: "Liberation Serif", serif; font-style: italic; font-size: 19px; line-height: 22px; color: #111; }
  .klub { font-size: 30px; line-height: 26px; padding-left: 20px; }
  .second { margin-left: 22px; }
  .balance { display: flex; flex-direction: column; align-items: center; width: 108px; padding: 20px 0 0 7px; color: #0b0b0b; }
  .balance b { font-size: 27px; line-height: 30px; }
  .balance span { font-family: "Liberation Serif", serif; font-style: italic; font-size: 22px; line-height: 26px; padding-right: 6px; }
  .abc-logo { width: 102px; height: 77px; margin-left: 30px; margin-top: 1px; box-shadow: 0 0 3px 1px #999; font-family: "Liberation Sans", sans-serif; }

  .banner { position: relative; margin-left: 3px; padding: 11px 34px 14px 37px; height: 308px; color: #fff; background: #178bca; box-shadow: inset 0 0 3px 1px #5aa9cf, 0 2px 3px #666; text-shadow: 0 2px 3px #0a4a78; }
  .theme { font-size: 26px; line-height: 36px; }
  .banner h2 { font-size: 40px; line-height: 58px; text-align: center; color: #ffc80a; white-space: nowrap; }
  .info { display: flex; justify-content: space-between; margin-top: 27px; padding-right: 10px; font-weight: bold; }
  .date { font-size: 33px; line-height: 52px; }
  .time { font-size: 20px; line-height: 34px; }
  .place { text-align: right; font-size: 20px; line-height: 31px; }
  .city { font-size: 27px; line-height: 38px; padding-right: 6px; }
  .screw { position: absolute; width: 10px; height: 10px; }
  .tl { left: 9px; top: 7px; } .tr { right: 9px; top: 7px; } .bl { left: 9px; bottom: 9px; } .br { right: 9px; bottom: 9px; }
  .program { margin: auto 0 5px -3px; align-self: flex-start; font-family: Lato, "Open Sans", sans-serif; font-size: 40px; line-height: 40px; color: #c00000; white-space: nowrap; border-bottom: 3px solid #c00000; }

  .vscroll { grid-column: 3; grid-row: 1 / 4; display: flex; flex-direction: column; background: #a9c7f3; }
  .vtop { height: 22px; display: flex; flex-direction: column; align-items: center; padding-top: 4px; gap: 2px; }
  .vtop span { width: 8px; height: 2px; background: #333c55; }
  .vtop button { width: 15px; height: 14px; background: #d3d6dd; border: 1px solid #8a94a8; }
  .vtop svg { width: 12px; height: 12px; }
  .vtrack { flex: 1; display: flex; flex-direction: column; align-items: center; padding: 6px 1px 4px; margin: 0 1px; background: linear-gradient(90deg, #6f92c4, #7f9dca); }
  .tri { width: 8px; height: 5px; }
  .vtrack .before { flex: 304; } .vtrack .after { flex: 331; }
  .vthumb { width: 13px; height: 39px; flex-direction: column; gap: 1px; border: 1px solid #4d618e; background: linear-gradient(90deg, #f2f5fa, #cdd6e6); }
  .vthumb i { width: 7px; height: 1px; background: #68748a; }
  .browse { height: 60px; display: flex; flex-direction: column; align-items: center; gap: 7px; padding-top: 4px; }
  .browse svg { width: 8px; height: 8px; }
  .hscroll { grid-column: 1 / 3; display: flex; align-items: stretch; border-top: 1px solid #5581c4; background: #7997c2; }
  .end { width: 15px; border: 1px solid #5d719c; background: linear-gradient(#f0f4fb, #c3cddf); }
  .end svg { width: 5px; height: 8px; }
  .hscroll .before { flex: 151; } .hscroll .after { flex: 260; }
  .hthumb { flex: 744; gap: 1px; border: 1px solid #5c84c3; box-shadow: inset 0 0 0 1px #d9e8fc; background: linear-gradient(#cbdff9, #a3c4f3); }
  .hthumb i { width: 1px; height: 7px; background: #66789c; }

  .status { display: flex; align-items: stretch; height: 21px; border-top: 1px solid #5678b0; background: linear-gradient(#d8e7fb, #c3dafa 40%, #abcaf5 50%, #d5e6fc); }
  .cell { display: flex; align-items: center; padding: 0 9px 0 8px; border-right: 1px solid #9ab6df; }
  .cell.spell { border-right: 0; } .cell.lang { padding-left: 7px; }
  .right { margin-left: auto; display: flex; align-items: center; padding: 0 4px 0 5px; border-left: 2px solid #6f93c8; background: linear-gradient(#a9c7f0, #84a9de 50%, #9cc0f0); }
  .views { display: flex; border: 1px solid #7b9acb; border-radius: 2px; background: #c4d8f3; }
  .views button { width: 17px; height: 16px; }
  .views svg { width: 12px; height: 12px; }
  .views .on { background: #ffc562; }
  .pct { width: 40px; text-align: center; }
  .rnd svg { width: 16px; height: 16px; }
  .zoom { appearance: none; width: 95px; height: 14px; margin: 0; background: linear-gradient(#cfe0f8, #cfe0f8) center / 100% 1px no-repeat, linear-gradient(#cfe0f8, #cfe0f8) 48px center / 1px 7px no-repeat; }
  .zoom::-webkit-slider-thumb { appearance: none; width: 9px; height: 12px; border: 1px solid #4d6590; border-radius: 1px 1px 5px 5px; background: #dfe9f8; }

  .taskbar { display: flex; align-items: center; height: 28px; padding: 0 2px 1px; border-top: 1px solid #fff; background: #d4d0c8; color: #111; }
  .start { height: 22px; width: 47px; gap: 2px; font-weight: bold; }
  .start, .tasks button { border: 1px solid; border-color: #fff #444 #444 #fff; box-shadow: inset -1px -1px 0 #8a867e; background: #d4d0c8; }
  .quick { display: flex; align-items: center; gap: 6px; width: 80px; margin: 0 0 0 7px; }
  .quick .i16, .tray .i16 { width: 15px; height: 15px; }
  .quick b { font-size: 12px; margin: -6px 0 0 3px; }
  .tasks { flex: 1; min-width: 0; display: grid; grid-template-columns: repeat(6, minmax(0, 1fr)); gap: 2px; }
  .tasks button { justify-content: flex-start; height: 22px; gap: 4px; padding-left: 3px; overflow: hidden; }
  .tasks .on { border-color: #444 #fff #fff #444; box-shadow: inset 1px 1px 0 #8a867e; background: #ebe9e5; font-weight: bold; }
  .en { margin: 0 2px 0 10px; width: 13px; line-height: 16px; background: #14246c; color: #fff; text-align: center; overflow: hidden; }
  .tray { display: flex; align-items: center; gap: 2px; height: 23px; width: 123px; padding-left: 4px; border: 1px solid; border-color: #8a867e #fff #fff #8a867e; }
  .tray b { font-size: 12px; margin-right: 2px; }
  .tray time { margin-left: auto; padding-right: 10px; }
</style>
